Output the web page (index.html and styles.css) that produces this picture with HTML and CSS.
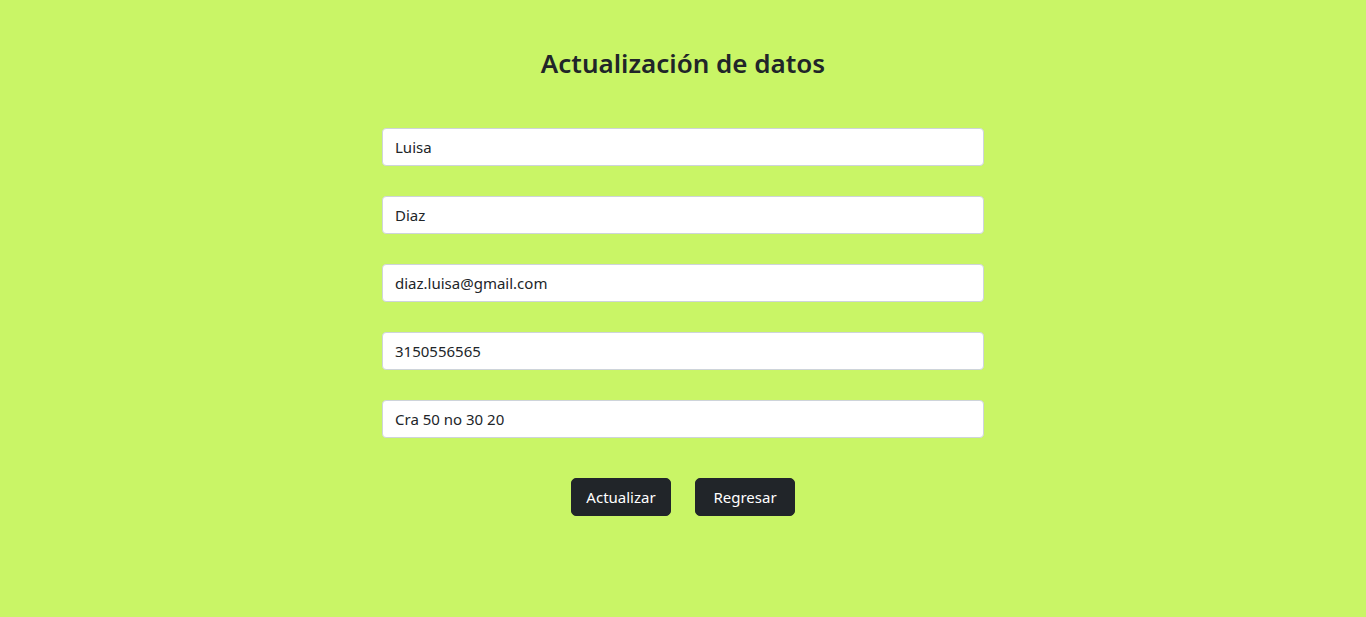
FILE: index.html
```html
<!DOCTYPE html>
<html lang="es">
<head>
<meta charset="utf-8">
<title>Actualización de datos</title>
<link rel="stylesheet" href="styles.css">
</head>
<body>
<main class="page">
  <h3 class="title">Actualización de datos</h3>
  <form class="form">
    <input class="field" type="text" value="Luisa">
    <input class="field" type="text" value="Diaz">
    <input class="field" type="text" value="diaz.luisa@gmail.com">
    <input class="field" type="text" value="3150556565">
    <input class="field" type="text" value="Cra 50 no 30 20">
    <div class="actions">
      <button class="btn" type="button">Actualizar</button>
      <button class="btn" type="button">Regresar</button>
    </div>
  </form>
</main>
</body>
</html>
```

FILE: styles.css
```css
* { box-sizing: border-box; }
html, body {
  margin: 0;
  height: 100%;
}
body {
  background: #c9f566;
  font-family: "Noto Sans", "Segoe UI", sans-serif;
  color: #212529;
}
.page {
  display: flex;
  flex-direction: column;
  align-items: center;
  padding-top: 47px;
}
.title {
  margin: 0;
  font-size: 26px;
  font-weight: 600;
  line-height: 32px;
  color: #212529;
}
.form {
  width: 602px;
  margin-top: 49px;
  display: flex;
  flex-direction: column;
  gap: 30px;
}
.field {
  width: 100%;
  height: 38px;
  padding: 6px 12px;
  font-family: inherit;
  font-size: 15px;
  color: #212529;
  background: #fff;
  border: 1px solid #ced4da;
  border-radius: 4px;
  outline: none;
}
.actions {
  display: flex;
  justify-content: center;
  gap: 24px;
  margin-top: 10px;
}
.btn {
  width: 100px;
  height: 38px;
  font-family: inherit;
  font-size: 15px;
  color: #fff;
  background: #212529;
  border: 1px solid #212529;
  border-radius: 5px;
  cursor: pointer;
}
```
